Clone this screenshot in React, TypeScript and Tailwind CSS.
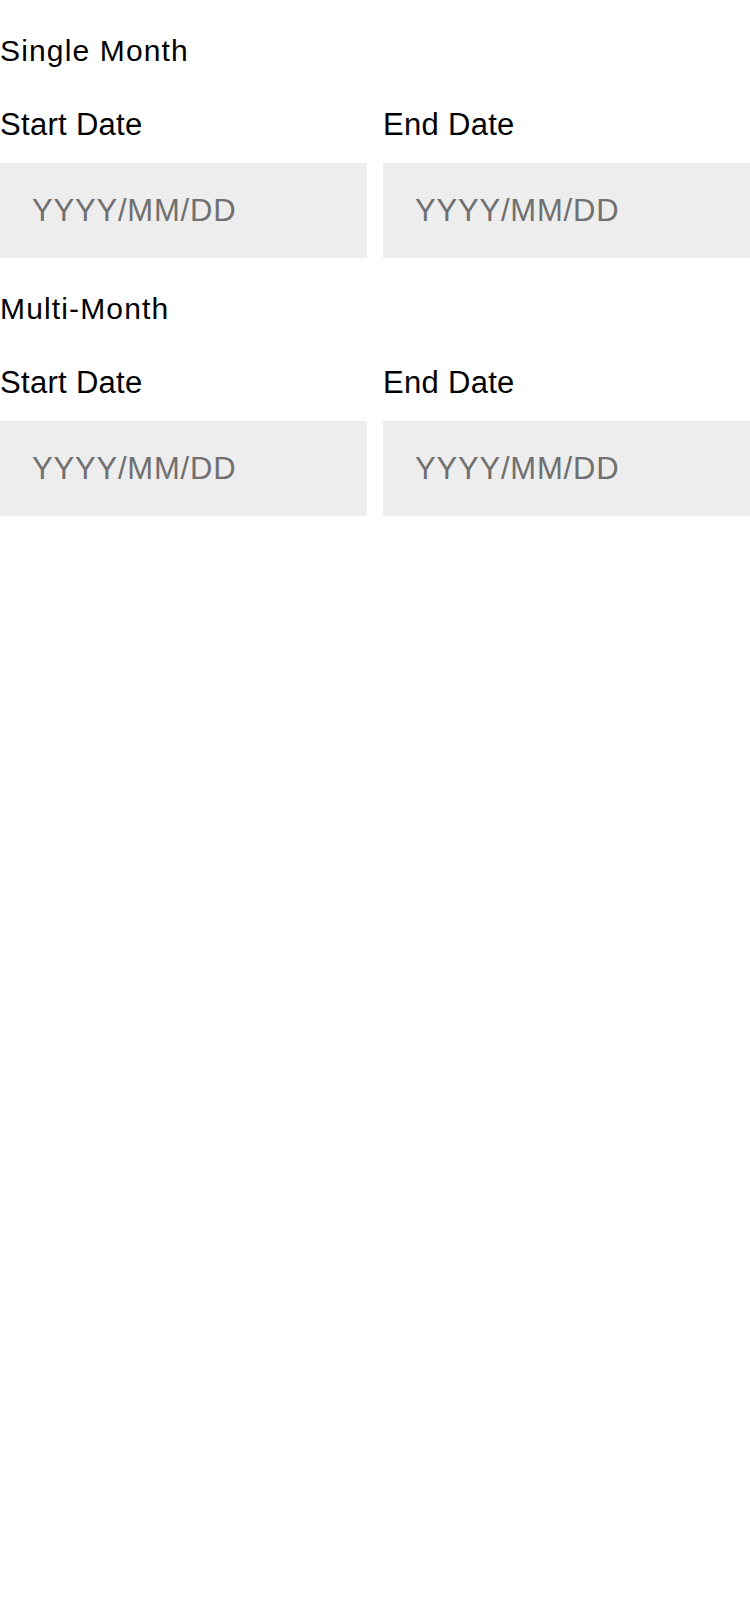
import React from "react";

function Field({ label }: { label: string }) {
  return (
    <div className="flex flex-col">
      <label className="text-[31px] leading-[34px] tracking-[0.3px] text-black">{label}</label>
      <input
        className="mt-[21px] h-[95px] w-full bg-[#ededed] pl-[32px] text-[31px] tracking-[0.8px] text-black placeholder:text-[#707070] outline-none"
        placeholder="YYYY/MM/DD"
        readOnly
      />
    </div>
  );
}

function Section({ title }: { title: string }) {
  return (
    <div className="mt-[34px]">
      <div className="text-[30px] leading-[34px] tracking-[1.15px] text-black">{title}</div>
      <div className="mt-[40px] grid grid-cols-2 gap-[16px]">
        <Field label="Start Date" />
        <Field label="End Date" />
      </div>
    </div>
  );
}

export default function App() {
  return (
    <div className="min-h-[1600px] w-[750px] bg-white font-['Liberation_Sans',Arial,sans-serif]">
      <Section title="Single Month" />
      <Section title="Multi-Month" />
    </div>
  );
}
